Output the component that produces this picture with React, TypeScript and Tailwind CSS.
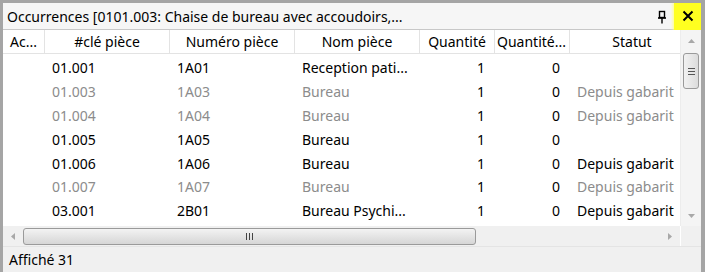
import React from "react";

type Row = {
  cle: string;
  numero: string;
  nom: string;
  qte: string;
  qte2: string;
  statut: string;
  dim?: boolean;
};

const rows: Row[] = [
  { cle: "01.001", numero: "1A01", nom: "Reception pati...", qte: "1", qte2: "0", statut: "" },
  { cle: "01.003", numero: "1A03", nom: "Bureau", qte: "1", qte2: "0", statut: "Depuis gabarit", dim: true },
  { cle: "01.004", numero: "1A04", nom: "Bureau", qte: "1", qte2: "0", statut: "Depuis gabarit", dim: true },
  { cle: "01.005", numero: "1A05", nom: "Bureau", qte: "1", qte2: "0", statut: "" },
  { cle: "01.006", numero: "1A06", nom: "Bureau", qte: "1", qte2: "0", statut: "Depuis gabarit" },
  { cle: "01.007", numero: "1A07", nom: "Bureau", qte: "1", qte2: "0", statut: "Depuis gabarit", dim: true },
  { cle: "03.001", numero: "2B01", nom: "Bureau Psychi...", qte: "1", qte2: "0", statut: "Depuis gabarit" },
];

const PinIcon = () => (
  <svg width="10" height="14" viewBox="0 0 10 14">
    <rect x="2.5" y="1.5" width="5" height="6" fill="none" stroke="#000" strokeWidth="1.4" />
    <line x1="1" y1="8" x2="9" y2="8" stroke="#000" strokeWidth="1.6" />
    <line x1="5" y1="8" x2="5" y2="13.5" stroke="#000" strokeWidth="1.4" />
  </svg>
);

const CloseIcon = () => (
  <svg width="12" height="12" viewBox="0 0 12 12">
    <path d="M1.5 1.5 L10.5 10.5 M10.5 1.5 L1.5 10.5" stroke="#000" strokeWidth="2" />
  </svg>
);

const Arrow = ({ dir }: { dir: "up" | "down" | "left" | "right" }) => {
  const pts = {
    up: "0,4 3.5,0 7,4",
    down: "0,0 3.5,4 7,0",
    left: "4,0 0,3.5 4,7",
    right: "0,0 4,3.5 0,7",
  }[dir];
  const horiz = dir === "left" || dir === "right";
  return (
    <svg width={horiz ? 4 : 7} height={horiz ? 7 : 4} viewBox={horiz ? "0 0 4 7" : "0 0 7 4"}>
      <polygon points={pts} fill="#a8a8a8" />
    </svg>
  );
};

const headerCell = "flex items-center justify-center border-r border-[#e3e3e3] truncate";

export default function App() {
  return (
    <div
      className="w-[705px] h-[272px] flex flex-col bg-[#f0f0f0] border-t-[3px] border-l-[3px] border-r-4 border-[#a5a5a5] overflow-hidden text-black"
      style={{ fontFamily: '"Noto Sans", "Open Sans", sans-serif' }}
    >
      {/* title bar */}
      <div className="h-[27px] flex items-center bg-[#f6f6f6] border-b border-[#c8c8c8] text-[14px]">
        <div className="flex-1 pl-[4px] truncate">Occurrences [0101.003: Chaise de bureau avec accoudoirs,...</div>
        <div className="w-[24px] flex justify-center mt-[1px]">
          <PinIcon />
        </div>
        <div className="w-[27px] h-[27px] flex items-center justify-center bg-[#ffff20] shadow-[0_0_3px_1px_#ffff80]">
          <CloseIcon />
        </div>
      </div>

      {/* grid + vertical scrollbar */}
      <div className="flex h-[196px] bg-white text-[14px]">
        <div className="w-[677px] flex flex-col">
          <div className="flex h-[24px] border-b border-[#e3e3e3]">
            <div className={`${headerCell} w-[42px]`}>Ac...</div>
            <div className={`${headerCell} w-[125px]`}>#clé pièce</div>
            <div className={`${headerCell} w-[125px]`}>Numéro pièce</div>
            <div className={`${headerCell} w-[125px]`}>Nom pièce</div>
            <div className={`${headerCell} w-[75px]`}>Quantité</div>
            <div className={`${headerCell} w-[75px] justify-start pl-[2px]`}>Quantité...</div>
            <div className="flex items-center justify-center w-[110px] pl-[14px]">Statut</div>
          </div>
          <div className="flex flex-col pt-[2px]">
            {rows.map((r) => (
              <div key={r.cle} className={`flex h-[23.8px] items-center ${r.dim ? "text-[#8c8c8c]" : "text-black"}`}>
                <div className="w-[42px]" />
                <div className="w-[125px] pl-[7px]">{r.cle}</div>
                <div className="w-[125px] pl-[7px]">{r.numero}</div>
                <div className="w-[125px] pl-[7px] truncate">{r.nom}</div>
                <div className="w-[75px] pr-[10px] text-right text-black">{r.qte}</div>
                <div className="w-[75px] pr-[10px] text-right text-black">{r.qte2}</div>
                <div className="w-[110px] pl-[7px] whitespace-nowrap">{r.statut}</div>
              </div>
            ))}
          </div>
        </div>
        <div className="w-[21px] flex flex-col items-center bg-[#f4f4f4] border-l border-[#ececec]">
          <div className="h-[17px] flex items-center justify-center mt-[2px]">
            <Arrow dir="up" />
          </div>
          <div className="w-[16px] h-[36px] mt-[4px] rounded-[3px] border border-[#9a9a9a] bg-gradient-to-r from-[#f2f2f2] to-[#dcdcdc] flex flex-col items-center justify-center gap-[2px]">
            <div className="w-[7px] h-px bg-[#555]" />
            <div className="w-[7px] h-px bg-[#555]" />
            <div className="w-[7px] h-px bg-[#555]" />
          </div>
          <div className="flex-1" />
          <div className="h-[20px] flex items-center justify-center">
            <Arrow dir="down" />
          </div>
        </div>
      </div>

      {/* horizontal scrollbar */}
      <div className="flex h-[21px] bg-[#f0f0f0] border-b border-[#e4e4e4]">
        <div className="w-[677px] flex items-center">
          <div className="w-[20px] flex justify-center">
            <Arrow dir="left" />
          </div>
          <div className="w-[453px] h-[17px] rounded-[3px] border border-[#9a9a9a] bg-gradient-to-b from-[#f3f3f3] to-[#d6d6d6] flex items-center justify-center gap-[2px]">
            <div className="w-px h-[7px] bg-[#444]" />
            <div className="w-px h-[7px] bg-[#444]" />
            <div className="w-px h-[7px] bg-[#444]" />
          </div>
          <div className="flex-1" />
          <div className="w-[20px] flex justify-center">
            <Arrow dir="right" />
          </div>
        </div>
        <div className="w-[21px] border-l border-white bg-[#f0f0f0]" />
      </div>

      {/* status bar */}
      <div className="flex-1 flex items-center pl-[6px] text-[14px] bg-[#f0f0f0]">Affiché 31</div>
    </div>
  );
}
